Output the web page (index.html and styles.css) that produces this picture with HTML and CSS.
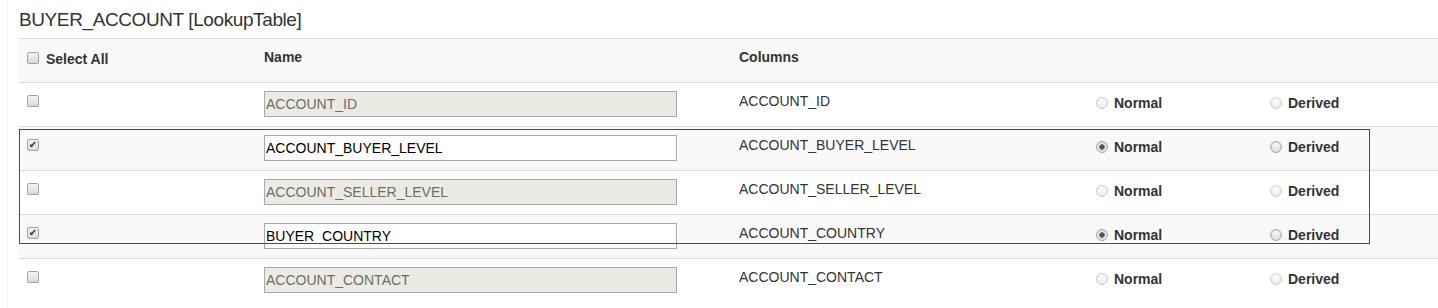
FILE: index.html
```html
<!DOCTYPE html>
<html lang="en">
<head>
  <meta charset="UTF-8" />
  <meta name="viewport" content="width=device-width, initial-scale=1" />
  <title>Lookup table columns</title>
  <link rel="stylesheet" href="styles.css">
</head>
<body>

  <div class="panel">
    <h3 class="title">BUYER_ACCOUNT [LookupTable]</h3>

    <table class="grid">
      <colgroup>
        <col class="c-select">
        <col class="c-name">
        <col class="c-column">
        <col class="c-normal">
        <col class="c-derived">
      </colgroup>
      <thead>
        <tr>
          <th><label class="select-all"><input type="checkbox" class="check"> Select All</label></th>
          <th>Name</th>
          <th>Columns</th>
          <th></th>
          <th></th>
        </tr>
      </thead>
      <tbody>
        <tr>
          <td><input type="checkbox" class="check"></td>
          <td><input type="text" class="name-input" value="ACCOUNT_ID" disabled></td>
          <td>ACCOUNT_ID</td>
          <td><label class="opt"><input type="radio" class="radio" name="r1" disabled>Normal</label></td>
          <td><label class="opt"><input type="radio" class="radio" name="r1" disabled>Derived</label></td>
        </tr>
        <tr class="striped">
          <td><input type="checkbox" class="check" checked></td>
          <td><input type="text" class="name-input" value="ACCOUNT_BUYER_LEVEL"></td>
          <td>ACCOUNT_BUYER_LEVEL</td>
          <td><label class="opt"><input type="radio" class="radio" name="r2" checked>Normal</label></td>
          <td><label class="opt"><input type="radio" class="radio" name="r2">Derived</label></td>
        </tr>
        <tr>
          <td><input type="checkbox" class="check"></td>
          <td><input type="text" class="name-input" value="ACCOUNT_SELLER_LEVEL" disabled></td>
          <td>ACCOUNT_SELLER_LEVEL</td>
          <td><label class="opt"><input type="radio" class="radio" name="r3" disabled>Normal</label></td>
          <td><label class="opt"><input type="radio" class="radio" name="r3" disabled>Derived</label></td>
        </tr>
        <tr class="striped">
          <td><input type="checkbox" class="check" checked></td>
          <td><input type="text" class="name-input" value="BUYER_COUNTRY"></td>
          <td>ACCOUNT_COUNTRY</td>
          <td><label class="opt"><input type="radio" class="radio" name="r4" checked>Normal</label></td>
          <td><label class="opt"><input type="radio" class="radio" name="r4">Derived</label></td>
        </tr>
        <tr>
          <td><input type="checkbox" class="check"></td>
          <td><input type="text" class="name-input" value="ACCOUNT_CONTACT" disabled></td>
          <td>ACCOUNT_CONTACT</td>
          <td><label class="opt"><input type="radio" class="radio" name="r5" disabled>Normal</label></td>
          <td><label class="opt"><input type="radio" class="radio" name="r5" disabled>Derived</label></td>
        </tr>
      </tbody>
    </table>

    <!-- annotation box drawn over the selected rows -->
    <div class="highlight"></div>
  </div>

</body>
</html>
```

FILE: styles.css
```css
body {
  margin: 0;
  font-family: 'Liberation Sans', Arial, sans-serif;
  font-size: 14px;
  color: #333;
  background: white;
}
.panel {
  position: relative;
  margin-left: 7px;
  padding-left: 11px;
  border-left: 1px solid #f0f0f0;
  min-height: 100vh;
  box-sizing: border-box;
}
.title {
  margin: 0 0 8px;
  padding-top: 10px;
  font-size: 19px;
  line-height: 20px;
  font-weight: normal;
  letter-spacing: -0.4px;
  color: #333;
}
.grid {
  width: 1419px;
  table-layout: fixed;
  border-collapse: separate;
  border-spacing: 0;
}
.c-select { width: 237px; }
.c-name { width: 475px; }
.c-column { width: 357px; }
.c-normal { width: 174px; }
.c-derived { width: 176px; }

.grid th,
.grid td {
  height: 44px;
  padding: 8px 8px 0;
  box-sizing: border-box;
  border-top: 1px solid #ddd;
  text-align: left;
  vertical-align: top;
  line-height: 20px;
}
.grid th {
  background: #f9f9f9;
  font-weight: 700;
}
.grid tr.striped td {
  background: #f9f9f9;
}

.select-all {
  display: flex;
  align-items: flex-start;
  gap: 7px;
  height: 20px;
  padding-top: 2px;
  box-sizing: border-box;
}
.select-all .check {
  margin-top: 3px;
}

.check {
  appearance: none;
  -webkit-appearance: none;
  width: 12px;
  height: 12px;
  margin: 4px 0 0;
  border: 1px solid #a2a2a2;
  border-radius: 2px;
  background: linear-gradient(#f4f4f4, #dadada);
  box-sizing: border-box;
  vertical-align: top;
  flex: none;
}
.check:checked::after {
  content: "\2714";
  display: block;
  font-family: 'DejaVu Sans', sans-serif;
  font-size: 10px;
  line-height: 10px;
  text-align: center;
  color: #333;
}

.name-input {
  width: 413px;
  height: 26px;
  margin: 0;
  padding: 0 1px;
  border: 1px solid #a9a9a9;
  border-radius: 0;
  box-sizing: border-box;
  font-family: inherit;
  font-size: 14px;
  color: #000;
  background: white;
  outline: none;
}
.name-input:disabled {
  background: #ebebe4;
  color: #6d6d6d;
}

.opt {
  display: inline-flex;
  align-items: center;
  gap: 6px;
  margin-top: 2px;
  font-weight: 700;
  color: #333;
}
.radio {
  appearance: none;
  -webkit-appearance: none;
  width: 12px;
  height: 12px;
  margin: 0;
  border: 1px solid #a8a8a8;
  border-radius: 50%;
  background: radial-gradient(circle at 50% 35%, #f8f8f8, #d4d4d4);
  box-sizing: border-box;
  flex: none;
}
.radio:disabled {
  border-color: #d0d0d0;
  background: radial-gradient(circle at 50% 35%, #fdfdfd, #e6e6e6);
}
.radio:checked {
  background: radial-gradient(circle, #4a4a4a 0, #5a5a5a 2.4px, #e4e4e4 3px, #d6d6d6 100%);
}

.highlight {
  position: absolute;
  left: 11px;
  top: 129px;
  width: 1351px;
  height: 115px;
  border: 1px solid #ff0000;
  box-sizing: border-box;
  pointer-events: none;
}
```
